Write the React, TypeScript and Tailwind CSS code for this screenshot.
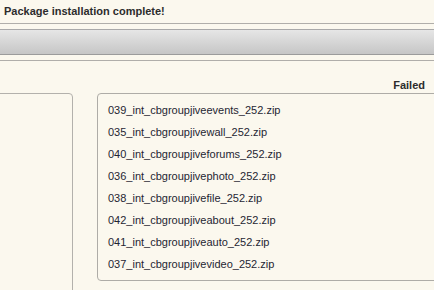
const files = [
  '039_int_cbgroupjiveevents_252.zip',
  '035_int_cbgroupjivewall_252.zip',
  '040_int_cbgroupjiveforums_252.zip',
  '036_int_cbgroupjivephoto_252.zip',
  '038_int_cbgroupjivefile_252.zip',
  '042_int_cbgroupjiveabout_252.zip',
  '041_int_cbgroupjiveauto_252.zip',
  '037_int_cbgroupjivevideo_252.zip',
];

export default function App() {
  return (
    <div className="h-[290px] w-[434px] overflow-hidden bg-[#fbf8ee] font-['Liberation_Sans',Arial,sans-serif] text-[11px] text-[#1f2633]">
      {/* message */}
      <div className="h-[24px] border-b-[1.5px] border-[#b0aeaa] pl-[4px] pt-[5px] font-bold leading-[13px] text-[#2c2c2c]">
        Package installation complete!
      </div>

      {/* toolbar */}
      <div className="mt-[5px] h-[26px] border-y border-t-[#a9a9a9] border-b-[#9b9b9b] bg-gradient-to-b from-[#e6e6e6] to-[#c6c6c6]" />

      <div className="mt-[5px] border-t-[1.5px] border-[#b0aeaa]">
        <div className="h-[32px] pr-[9px] pt-[18px] text-right font-bold leading-[13px] text-[#2c2c2c]">
          Failed
        </div>

        <div className="flex gap-[24px]">
          <div className="-ml-[10px] h-[210px] w-[83px] shrink-0 rounded-[4px] border border-[#b3b1ac]" />
          <div className="-mr-[10px] h-[188px] flex-1 rounded-[4px] border border-[#aeaca7] pl-[10px] pt-[10px]">
            {files.map((f) => (
              <div key={f} className="h-[22px] leading-[13px]">
                {f}
              </div>
            ))}
          </div>
        </div>
      </div>
    </div>
  );
}
